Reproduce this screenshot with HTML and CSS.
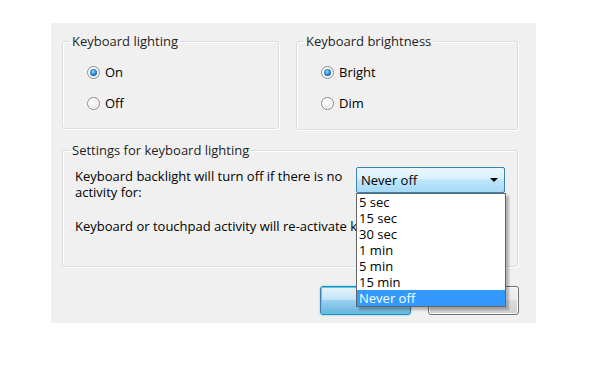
FILE: index.html
```html
<!DOCTYPE html>
<html lang="en">
<head>
    <meta charset="UTF-8">
    <meta name="viewport" content="width=device-width, initial-scale=1.0">
    <title>Keyboard lighting</title>
    <link rel="stylesheet" href="styles.css">
</head>
<body>
    <div class="dialog">
        <!-- Top groups -->
        <div class="groups">
            <fieldset class="group group-lighting">
                <legend>Keyboard lighting</legend>
                <label class="option"><span class="radio checked"></span>On</label>
                <label class="option"><span class="radio"></span>Off</label>
            </fieldset>
            <fieldset class="group group-brightness">
                <legend>Keyboard brightness</legend>
                <label class="option"><span class="radio checked"></span>Bright</label>
                <label class="option"><span class="radio"></span>Dim</label>
            </fieldset>
        </div>

        <!-- Timeout settings -->
        <fieldset class="group group-settings">
            <legend>Settings for keyboard lighting</legend>
            <div class="timeout-row">
                <p class="timeout-label">Keyboard backlight will turn off if there is no activity for:</p>
                <div class="combo">
                    <span class="combo-value">Never off</span>
                    <span class="combo-arrow"></span>
                    <ul class="combo-list">
                        <li>5 sec</li>
                        <li>15 sec</li>
                        <li>30 sec</li>
                        <li>1 min</li>
                        <li>5 min</li>
                        <li>15 min</li>
                        <li class="selected">Never off</li>
                    </ul>
                </div>
            </div>
            <p class="note">Keyboard or touchpad activity will re-activate keyboard lighting.</p>
        </fieldset>

        <div class="buttons">
            <button class="btn btn-default">OK</button>
            <button class="btn">Cancel</button>
        </div>
    </div>
</body>
</html>
```

FILE: styles.css
```css
body {
    margin: 0;
    background: #fff;
    font-family: "Open Sans", "Noto Sans", sans-serif;
    font-size: 13px;
    color: #000;
}

/* Dialog panel */
.dialog {
    margin: 23px 0 0 51px;
    width: 485px;
    height: 300px;
    box-sizing: border-box;
    padding: 10px 18px 0 11px;
    background: #f0f0f0;
}

/* Group boxes */
.groups { display: flex; gap: 17px; }
.group {
    margin: 0;
    padding: 0 12px;
    border: 1px solid #d5dfe5;
    border-radius: 3px;
    box-shadow: inset 1px 1px 0 #fff, 1px 1px 0 #fff;
    min-width: 0;
}
.group legend {
    margin-left: -5px;
    padding: 0 2px;
    line-height: 16px;
    color: #1e1e1e;
}
.group-lighting { width: 217px; height: 96px; box-sizing: border-box; padding-top: 13px; }
.group-brightness { width: 222px; height: 97px; box-sizing: border-box; padding-top: 13px; }
.group-settings { margin-top: 12px; height: 125px; box-sizing: border-box; padding-top: 10px; }

/* Radio options */
.option {
    display: flex;
    align-items: center;
    gap: 5px;
    height: 20px;
    margin: 0 0 11px 12px;
}
.radio {
    width: 11px;
    height: 11px;
    border: 1px solid #8b8b8b;
    border-radius: 50%;
    background: radial-gradient(circle at 40% 40%, #fff 0%, #f2f2f2 40%, #cfcfcf 100%);
    box-shadow: inset 0 0 0 1px #fff;
    position: relative;
}
.radio.checked::after {
    content: "";
    position: absolute;
    left: 2px;
    top: 2px;
    width: 7px;
    height: 7px;
    border-radius: 50%;
    background: radial-gradient(circle at 45% 40%, #9fdcff 0%, #2a8ad4 45%, #0b3e78 100%);
}

/* Timeout row */
.timeout-row { display: flex; align-items: flex-start; }
.timeout-label { margin: 0; width: 283px; line-height: 16px; padding-right: 8px; box-sizing: border-box; }
.note { margin: 18px 0 0; line-height: 16px; white-space: nowrap; }

/* Combo box */
.combo {
    position: relative;
    width: 150px;
    height: 26px;
    margin-top: -1px;
    box-sizing: border-box;
    border: 1px solid #3c7fb1;
    border-radius: 2px;
    background: linear-gradient(#eaf6fd 0%, #d9f0fc 45%, #bee6fd 50%, #a7d9f5 100%);
    display: flex;
    align-items: center;
    padding-left: 4px;
}
.combo-value { flex: 1; }
.combo-arrow {
    width: 0;
    height: 0;
    border-left: 4px solid transparent;
    border-right: 4px solid transparent;
    border-top: 4px solid #000;
    margin-right: 6px;
}
.combo-list {
    position: absolute;
    top: 100%;
    left: -1px;
    width: 150px;
    margin: 1px 0 0;
    padding: 0;
    list-style: none;
    box-sizing: border-box;
    background: #fff;
    border: 1px solid #646464;
    box-shadow: 3px 3px 2px rgba(0, 0, 0, 0.25);
    z-index: 10;
}
.combo-list li { height: 16px; line-height: 16px; padding-left: 2px; }
.combo-list li.selected { background: #3399ff; color: #fff; }

/* Buttons */
.buttons { display: flex; justify-content: flex-end; gap: 17px; margin-top: 19px; margin-right: -1px; }
.btn {
    width: 91px;
    height: 29px;
    font: inherit;
    border: 1px solid #707070;
    border-radius: 3px;
    background: linear-gradient(#f2f2f2 0%, #ebebeb 45%, #dddddd 50%, #cfcfcf 100%);
    box-shadow: inset 0 0 0 1px #fcfcfc;
}
.btn-default {
    border-color: #3c7fb1;
    background: linear-gradient(#e5f4fc 0%, #c4e5f6 45%, #98d1ef 50%, #68b3db 100%);
    box-shadow: inset 0 0 0 1px #48d0f0, 0 0 2px #48d0f0;
}
```
